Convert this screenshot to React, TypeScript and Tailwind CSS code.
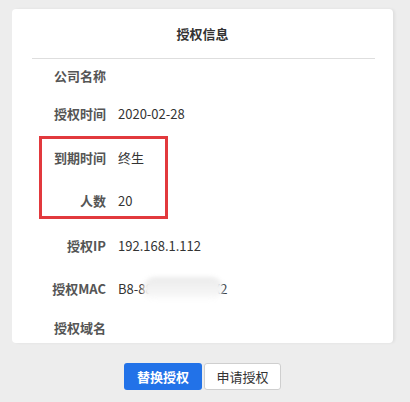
import React from "react";

interface RowProps {
  label: string;
  value?: React.ReactNode;
  height: string;
  labelWidth?: string;
}

function Row({ label, value, height, labelWidth = "w-[94px]" }: RowProps) {
  return (
    <div className={`flex items-center ${height}`}>
      <span className={`${labelWidth} shrink-0 text-right font-bold text-[#555]`}>{label}</span>
      {value !== undefined && <span className="ml-3 text-[#333]">{value}</span>}
    </div>
  );
}

function App() {
  return (
    <div
      className="min-h-screen bg-[#ededed] pt-[9px] text-[13px] leading-[18px]"
      style={{ fontFamily: '"Noto Sans CJK SC", "Noto Sans", sans-serif' }}
    >
      <div className="ml-[12px] h-[334px] w-[381px] overflow-hidden rounded-[4px] bg-white shadow-[2px_0_3px_rgba(0,0,0,0.06)]">
        <div className="flex h-[49px] items-center justify-center font-bold text-[#333]">授权信息</div>
        <div className="ml-[20px] mr-[18px] h-px bg-[#dedede]" />

        <Row label="公司名称" height="h-[34px]" />
        <Row label="授权时间" value="2020-02-28" height="h-[42px]" />

        <div className="ml-[27px] mt-px w-[129px] border-[3px] border-[#e2393d]">
          <Row label="到期时间" value="终生" height="h-[38px]" labelWidth="w-[64px]" />
          <div className="h-[39px] pt-[9px]">
            <Row label="人数" value="20" height="h-[30px]" labelWidth="w-[64px]" />
          </div>
        </div>

        <Row label="授权IP" value="192.168.1.112" height="h-[54px]" />
        <div className="relative">
          <Row label="授权MAC" value="B8-88-XX-XX-XX-X2" height="h-[32px]" />
          <div className="absolute left-[131px] top-[4px] h-[24px] w-[80px] rounded-full bg-[linear-gradient(180deg,#ebebeb,#f5f5f5_65%,#ffffff)] blur-[2px]" />
        </div>
        <Row label="授权域名" height="h-[45px]" />
      </div>

      <div className="ml-[12px] mt-[20px] flex w-[381px] justify-center gap-[2px]">
        <button className="h-[27px] w-[78px] rounded-[3px] bg-[#2272e8] font-bold text-white">替换授权</button>
        <button className="h-[27px] w-[77px] rounded-[3px] border border-[#cfcfcf] bg-white text-[#333]">申请授权</button>
      </div>
    </div>
  );
}

export default App;
